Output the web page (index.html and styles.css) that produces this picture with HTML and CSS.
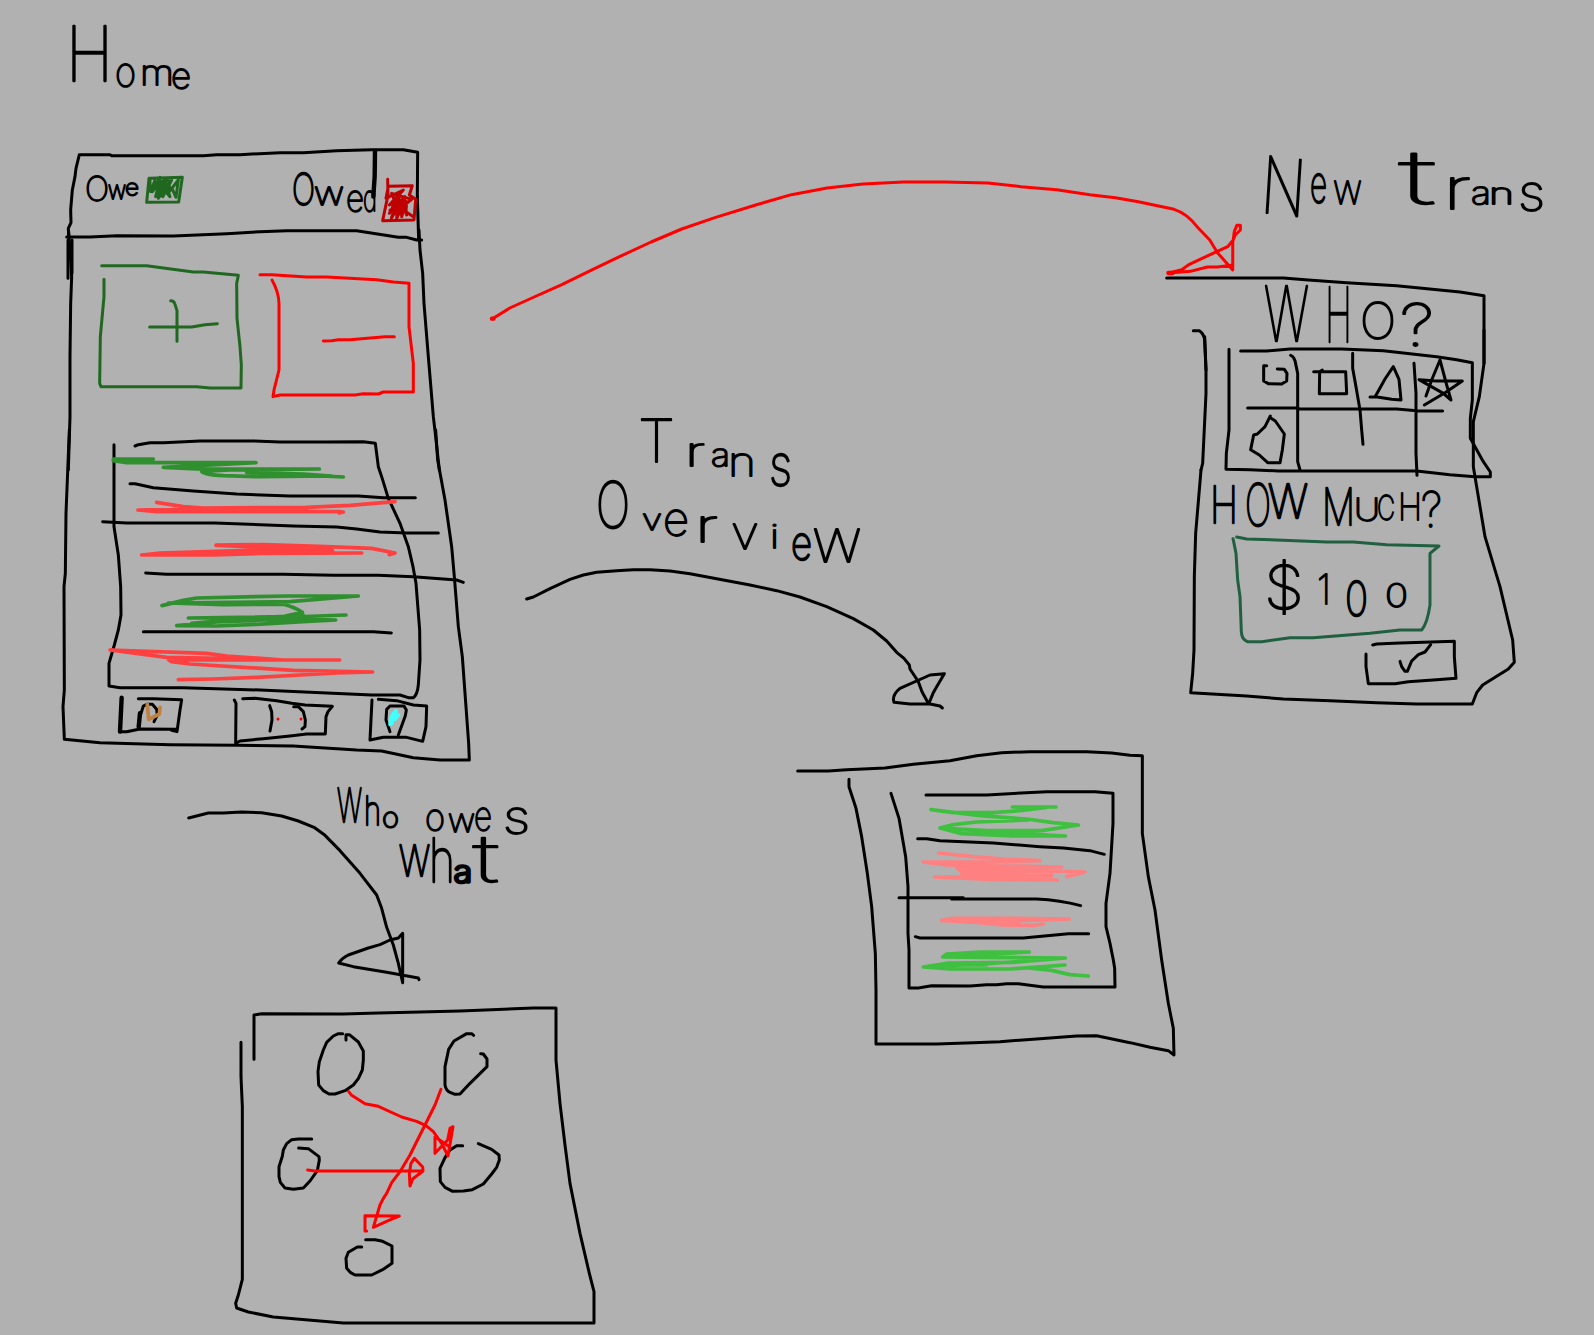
FILE: index.html
```html
<!DOCTYPE html>
<html lang="en">
<head>
<meta charset="utf-8">
<title>Home flow sketch</title>
<link rel="stylesheet" href="styles.css">
</head>
<body>
<main class="board">
<svg class="canvas" viewBox="0 0 1594 1335" role="img" aria-label="App flow sketch">
  <!-- Home screen: header -->
  <g class="ink" transform="translate(50 10) scale(.33333)">
    <path d="M56 680L55 655 63 638 62 600 67 540 75 500 78 475 88 434 180 434 185 437 460 437 500 434 570 434 690 428 760 428 860 422 965 419 1060 419 1103 427 1102 560 1106 690"/>
    <path d="M50 681L120 681 200 677 370 678 530 671 630 665 710 662 920 662 1045 682 1070 682 1100 690 1115 690"/>
    <path class="bold" d="M975 424L974 500 970 560"/>
    <path class="forest" d="M297 505L290 577 386 576 397 502 300 505 300 540M302 545L315 510 308 545 330 502 317 560 350 505 325 565 365 510 338 560 350 530 360 560 330 525 345 515 358 545 385 510 378 562 366 535M312 520L355 510 360 540 330 555 315 530 350 525 340 558"/>
    <path class="crimson" d="M1013 508L1014 555 998 632 1092 630 1097 568 1078 555 1087 527 1015 529 1008 565 1060 540 1018 585 1050 550 1018 610 1060 565 1024 625 1048 555 1040 626 1065 560 1055 620 1070 575 1068 605 1090 620M1025 580L1040 615 1030 560 1050 612 1060 580 1070 615M1025 550L1085 568 1045 600 1020 600"/>
  </g>
  <!-- Home screen: add and subtract tiles -->
  <g class="ink" transform="translate(50 230) scale(.33333)">
    <path d="M56 5L60 60 65 140 62 220 60 380 60 560 55 720"/>
    <path d="M54 30V145M66 30V130"/>
    <path d="M1107 0L1110 60 1118 130 1122 220 1135 380 1150 560 1157 620 1168 720"/>
    <path class="forest" d="M155 107H290L430 126 460 126 565 136 560 160 561 265 570 350 574 405 573 474 480 474 440 470 153 470 149 460 151 320 162 200V148"/>
    <path class="forest" d="M362 212Q372 212 374 220L381 242V334M299 291H425L465 284 502 281"/>
    <path class="red" d="M630 134L665 134 770 141 830 141 980 149 1030 156 1077 160V290L1090 400V486H1000L985 492 940 491 915 495H690L669 500 672 480 687 420 687 220Q686 185 666 150"/>
    <path class="red" d="M820 333L845 332 865 329 900 329 1005 320 1033 320"/>
  </g>
  <!-- Home screen: transaction list and tab bar -->
  <g class="ink" transform="translate(50 430) scale(.33333)">
    <path d="M58 0L48 250 46 430 42 470 43 780 39 830 43 928 150 938 360 944 560 946 730 948 920 960 995 963 1090 983 1170 990 1258 990 1256 940 1237 680 1225 590 1213 440 1205 350 1185 210 1163 90 1157 0"/>
    <path d="M192 44V290L205 375 212 470 213 555 205 600 193 645 177 700V768L210 773 400 773 630 780 965 795 1050 795 1075 803 1090 803Q1102 795 1105 765L1110 690 1109 600 1098 460 1089 410 1075 350 1050 280 1015 205 995 140 985 110 976 40 940 35 820 36 690 36 610 33 450 33 340 38 300 38 265 44 255 48"/>
    <path class="leaf wide" d="M310 87H190L190 92 230 98 618 98 340 112 440 117 808 117 540 120 455 124Q465 134 520 137L620 140 845 138 760 132 590 127 880 141"/>
    <path d="M240 161L255 161 310 173 430 183 560 192 720 198 925 198 1000 203 1096 203"/>
    <path class="coral wide" d="M320 217L400 230 460 234 770 232 900 226 1035 215M264 240L500 236 770 235M264 240L320 245 868 245 880 246 868 249"/>
    <path d="M158 275L230 279 495 279 730 288 860 291 920 297 990 306 1070 309 1165 309"/>
    <path class="coral wide" d="M498 345L640 344 830 350 965 355 1035 369 1018 374M498 346L700 354 848 362 640 360 330 369 275 375 490 375 640 370 935 369"/>
    <path d="M287 429L350 433 700 433 850 436 985 436 1090 440 1220 450 1240 457"/>
    <path class="leaf wide" d="M336 527L400 511 440 504 710 498 925 498 720 515 355 519 520 524 700 523Q735 532 757 547L700 560 415 564 640 564 888 555M857 570L760 568 640 570 500 576 380 587 500 588 620 583 760 575 857 570M425 580L560 568 760 555"/>
    <path d="M280 605L790 605 970 605 1024 609"/>
    <path class="coral wide" d="M869 690H700L530 678 470 670 180 660 350 682 540 686M869 690L356 690 365 695 420 702 730 721 968 726 860 729 620 742 490 747 385 749"/>
    <path class="bold" d="M215 803L210 905"/>
    <path d="M210 905L230 905 270 897 380 898M265 806H310L395 809 390 840 381 905 365 901"/>
    <path class="bold" d="M266 890L270 850"/>
    <path d="M270 860L280 828 290 823 307 823 320 838 322 855 312 875"/>
    <path class="copper wide" d="M292 823L296 868 328 852 330 832"/>
    <path d="M553 810L558 820 557 940 570 933 640 926 720 918 770 912 826 912 828 860 834 845 847 829 765 825 725 820 680 812 615 805 578 806"/>
    <path d="M659 827L665 845 666 870 660 903M731 830L745 830 760 845 766 870 765 890 756 897"/>
    <path class="red" d="M684 867h.1M753 867h.1"/>
    <path d="M966 810L962 890 960 930 1000 922 1070 922 1118 934 1128 890 1130 828 1090 825 1040 812 985 808"/>
    <path d="M1020 905L1008 870 1010 838 1020 828 1062 828 1069 840 1066 857 1045 915"/>
    <path class="cyan wide" d="M1038 842L1024 860 1020 883 1032 860 1038 842 1035 868 1045 855 1038 862M1030 850L1025 880"/>
  </g>
  <!-- Arrow: home to "who owes what" -->
  <g class="ink" transform="translate(180 770) scale(.33333)">
    <path d="M26 144L85 129 130 129 185 126 245 128 305 138 355 153 402 172 435 196 480 242 540 310 590 375 605 415 620 472 640 525 655 580 668 638V490L655 504 630 510 600 524 565 534 505 555Q485 565 476 579L520 590 620 607 715 624 717 629"/>
  </g>
  <!-- Who owes what screen -->
  <g class="ink" transform="translate(220 990) scale(.33333)">
    <path d="M102 208V75L125 71 370 72 475 69 600 66 720 63 940 54 1008 54V210L1020 340 1035 465 1050 580 1080 730 1108 850 1122 905V999H370L160 981 85 966 50 954 47 940 55 915 67 868V350L63 260V157"/>
    <path d="M378 150V134L388 134 415 156 430 183 430 210 427 240 415 266 400 285 375 302 345 312 327 312 310 302 296 285 294 245 298 215 310 180 320 157 340 138 355 131 368 131"/>
    <path d="M761 136L755 131 740 131 702 153 686 178 675 230 675 285Q678 302 690 307L705 313 720 312 750 280 801 230 801 207 790 192 782 191"/>
    <path d="M275 447H235L215 449 200 461 190 480 187 499 177 530 177 560 181 577 195 594 220 598 250 594 270 573 292 542 298 510 297 500 265 476 236 474"/>
    <path d="M728 467H710L690 480 675 503 660 535 661 575 675 592 698 604 730 603 757 599 790 582 815 552 830 532 838 510 837 495 815 478 775 461"/>
    <path d="M425 771L412 771 385 787 378 805 380 835 392 848 405 855H455L488 839 516 820 516 768 488 754 465 749 437 749"/>
    <path class="red" d="M386 305L395 316 435 341 475 349 545 381 590 394 618 407 640 425 665 460 684 498 699 410 690 415 683 450 645 490V440L688 470"/>
    <path class="red" d="M663 298L645 345 570 495 540 545 515 578 500 610 490 625 480 645 460 712 510 690 538 678 435 677V723H440"/>
    <path class="red" d="M263 540L285 543H609L608 531 583 505 573 520 568 550 570 588 578 567 609 543"/>
  </g>
  <!-- Arrow: home to transaction overview -->
  <g class="ink" transform="translate(470 380) scale(.33333)">
    <path d="M170 657L190 651 240 626 300 598 340 585 380 577 440 572 490 569 540 569 600 573 660 581 740 596 840 615 920 632 990 651 1070 680 1150 716 1210 750 1250 783 1280 817 1302 835 1318 855 1320 867 1345 905 1356 935 1376 972 1390 938 1400 920 1423 881 1380 885 1290 925Q1265 945 1272 967L1320 972 1380 972 1410 978 1417 984"/>
  </g>
  <!-- Transaction overview screen -->
  <g class="ink" transform="translate(780 730) scale(.33333)">
    <path d="M53 123H145L200 119 315 114 400 103 510 92 590 77 665 68 750 65H920L995 69 1050 76 1087 77V310L1105 440 1125 540 1145 690 1165 820 1180 895 1182 975 1165 962 1110 952 1050 938 950 917 890 918 780 926 660 935 580 938 470 942H288V780L286 670 275 530 262 430 245 320 228 235 207 170V148"/>
    <path d="M333 190L357 265 377 380 384 470V610L387 660V774H415L455 767 570 768 620 764 650 764 680 761 715 761 790 771H1005L1004 715 1000 690 990 640 978 590V520L990 430 999 280V190L945 185 800 185 620 195 438 195"/>
    <path class="lime wide" d="M828 231H697L800 232 720 242 640 248 520 248 453 239 600 257 740 267 820 278 895 285 785 302 620 302 480 294 520 284 590 276 745 270M480 294L545 311 700 318 856 318 640 306 510 296"/>
    <path d="M413 326H440L480 332 640 339 780 350 850 354 930 362 973 373"/>
    <path class="blush wide" d="M476 369L580 380 680 388 780 392 620 396 430 396 500 405 845 411 530 412 545 425 700 428 800 420M465 441L630 448 832 450M465 441L650 440 815 437 545 430M530 412L730 420 915 426 860 440"/>
    <path d="M357 503H550L515 507 770 507Q840 510 902 527"/>
    <path class="blush wide" d="M868 567L700 565 520 565 485 571 600 575 868 567M485 571L590 577 665 585 760 586 790 582M500 572L720 575"/>
    <path d="M406 620L420 624H730L865 611H926"/>
    <path class="lime wide" d="M748 666H600L500 672 488 681 620 682 856 684 700 697 505 699 430 711 510 717 690 717 855 705 745 714 815 721 870 734 925 738M488 681L748 666M430 711L640 700 856 684M510 705H620"/>
  </g>
  <!-- Arrow: home to new transaction -->
  <g class="ink" transform="translate(470 160) scale(.5102 .33333)">
    <path class="red" d="M44 476L78 444 130 408 180 374 240 329 290 292 355 246 415 207 480 173 560 135 630 104 700 84 770 72 850 66 930 66 1015 69 1080 80 1150 89 1215 104 1265 113 1310 125 1380 148Q1405 160 1425 200L1450 240 1465 278 1495 330V243L1500 225 1510 210 1510 196 1503 196 1498 215 1496 240 1485 260 1435 295 1410 313 1395 329 1370 339 1412 334 1445 321 1465 321 1492 316"/>
    <path class="red bold" d="M43 476h3M1369 339h8"/>
  </g>
  <!-- New transaction screen -->
  <g class="ink" transform="translate(1150 130) scale(.33333)">
    <path d="M50 444H400L475 450 590 458 740 467 930 486 1002 497V700"/>
    <path d="M130 602H148Q162 612 164 630L168 720"/>
  </g>
  <g class="ink" transform="translate(1170 330) scale(.33333)">
    <path d="M104 20L108 120 108 190 98 400 93 420M942 0V100L928 200 910 275V410L915 440"/>
    <path d="M177 58V300L169 370 168 418 240 419 325 423 740 423 840 434 915 440H961V426L940 395 901 325V265L907 210V98L860 89 800 80 640 62 515 57 360 57 290 63 212 63"/>
    <path d="M362 76Q370 78 375 92L383 130V395L390 420M548 70V115L557 165 570 240 575 300 579 343M732 100L738 190 738 370 741 436M233 234H380L390 237 680 237 740 242 818 243"/>
    <path d="M290 107L281 107 281 153 295 161 335 162 350 153 351 130 343 118 322 117"/>
    <path d="M431 125H527L530 191 448 191 449 125 457 120"/>
    <path d="M600 201L615 201 645 147 670 110 687 148 693 210 665 208 617 200"/>
    <path d="M763 225L825 188 877 153H800L747 149 820 190 843 210 830 165 810 90 785 150 768 198"/>
    <path d="M301 258L285 290 262 312 251 315 242 359 268 375 293 398 330 398 337 360 343 312 316 273 301 263"/>
  </g>
  <g class="ink" transform="translate(1170 470) scale(.33333)">
    <path d="M93 0L77 190 73 320 72 540 68 610 62 668 230 678 340 687 480 692 620 698 740 702 907 702 920 668 938 645 1015 597 1033 577 1028 510 990 350 945 200 915 20"/>
    <path class="teal" d="M200 201L230 207 320 210 470 216 550 216 650 224 807 228 780 250V405Q772 460 755 480L690 480 600 490 430 503 360 503 275 515 232 515Q215 508 214 485L210 380 203 330 198 250 191 215 189 206"/>
    <path d="M608 525L620 522 690 519 853 514 853 560 858 625 800 629 715 635 675 641H595L588 590V552"/>
    <path d="M690 574L695 590 705 604 712 604 725 573 745 554 765 546 782 524"/>
  </g>
  <!-- Labels -->
  <g class="label">
    <text><tspan class="tall" x="66" y="81" font-size="76" textLength="47" lengthAdjust="spacingAndGlyphs">H</tspan><tspan x="115" y="86" font-size="40" textLength="21" lengthAdjust="spacingAndGlyphs">o</tspan><tspan x="140" y="85" font-size="34" textLength="34" lengthAdjust="spacingAndGlyphs">m</tspan><tspan x="171" y="88" font-size="34" textLength="20" lengthAdjust="spacingAndGlyphs">e</tspan></text>
    <text><tspan x="85" y="201" font-size="34" textLength="24" lengthAdjust="spacingAndGlyphs">O</tspan><tspan x="108" y="199" font-size="24" textLength="18" lengthAdjust="spacingAndGlyphs">w</tspan><tspan x="125" y="195" font-size="22" textLength="14" lengthAdjust="spacingAndGlyphs">e</tspan></text>
    <text><tspan class="tall" x="292" y="205" font-size="44" textLength="23" lengthAdjust="spacingAndGlyphs">O</tspan><tspan x="314" y="205" font-size="32" textLength="30" lengthAdjust="spacingAndGlyphs">w</tspan><tspan x="346" y="211" font-size="36" textLength="18" lengthAdjust="spacingAndGlyphs">e</tspan><tspan x="363" y="211" font-size="36" textLength="14" lengthAdjust="spacingAndGlyphs">d</tspan></text>
    <text><tspan class="tall" x="1260" y="212" font-size="78" textLength="44" lengthAdjust="spacingAndGlyphs" rotate="5">N</tspan><tspan class="tall" x="1310" y="202" font-size="50" textLength="17" lengthAdjust="spacingAndGlyphs">e</tspan><tspan x="1333" y="204" font-size="41" textLength="29" lengthAdjust="spacingAndGlyphs">w</tspan> <tspan x="1399" y="204" font-size="74" textLength="37" lengthAdjust="spacingAndGlyphs">t</tspan><tspan x="1443" y="209" font-size="56" textLength="28" lengthAdjust="spacingAndGlyphs">r</tspan><tspan x="1471" y="204" font-size="31" textLength="20" lengthAdjust="spacingAndGlyphs">a</tspan><tspan x="1489" y="204" font-size="28" textLength="25" lengthAdjust="spacingAndGlyphs">n</tspan><tspan x="1518" y="210" font-size="48" textLength="27" lengthAdjust="spacingAndGlyphs">s</tspan></text>
    <text><tspan class="tall" x="1264" y="341" font-size="76" textLength="45" lengthAdjust="spacingAndGlyphs">W</tspan><tspan class="tall" x="1325" y="342" font-size="76" textLength="27" lengthAdjust="spacingAndGlyphs">H</tspan><tspan x="1360" y="339" font-size="50" textLength="36" lengthAdjust="spacingAndGlyphs">O</tspan><tspan x="1400" y="346" font-size="58" textLength="34" lengthAdjust="spacingAndGlyphs">?</tspan></text>
    <text><tspan class="tall" x="1210" y="523" font-size="50" textLength="28" lengthAdjust="spacingAndGlyphs">H</tspan><tspan class="tall" x="1245" y="526" font-size="58" textLength="26" lengthAdjust="spacingAndGlyphs">O</tspan><tspan class="tall" x="1268" y="518" font-size="46" textLength="40" lengthAdjust="spacingAndGlyphs">W</tspan> <tspan class="tall" x="1322" y="525" font-size="50" textLength="33" lengthAdjust="spacingAndGlyphs">M</tspan><tspan x="1354" y="521" font-size="31" textLength="26" lengthAdjust="spacingAndGlyphs">U</tspan><tspan x="1377" y="520" font-size="34" textLength="18" lengthAdjust="spacingAndGlyphs">C</tspan><tspan x="1398" y="520" font-size="37" textLength="24" lengthAdjust="spacingAndGlyphs">H</tspan><tspan x="1421" y="527" font-size="48" textLength="21" lengthAdjust="spacingAndGlyphs">?</tspan></text>
    <text><tspan x="1264" y="609" font-size="60" textLength="40" lengthAdjust="spacingAndGlyphs">$</tspan><tspan x="1317" y="604" font-size="41" textLength="14" lengthAdjust="spacingAndGlyphs">1</tspan><tspan class="tall" x="1345" y="616" font-size="48" textLength="23" lengthAdjust="spacingAndGlyphs">0</tspan><tspan x="1385" y="607" font-size="32" textLength="23" lengthAdjust="spacingAndGlyphs">0</tspan></text>
    <text><tspan x="638" y="462" font-size="59" textLength="37" lengthAdjust="spacingAndGlyphs">T</tspan><tspan x="685" y="466" font-size="40" textLength="20" lengthAdjust="spacingAndGlyphs">r</tspan><tspan x="711" y="466" font-size="30" textLength="19" lengthAdjust="spacingAndGlyphs">a</tspan><tspan x="728" y="476" font-size="40" textLength="28" lengthAdjust="spacingAndGlyphs">n</tspan><tspan class="tall" x="769" y="485" font-size="56" textLength="23" lengthAdjust="spacingAndGlyphs">s</tspan></text>
    <text><tspan class="tall" x="596" y="528" font-size="64" textLength="34" lengthAdjust="spacingAndGlyphs">O</tspan><tspan x="642" y="530" font-size="29" textLength="20" lengthAdjust="spacingAndGlyphs">v</tspan><tspan x="663" y="535" font-size="45" textLength="26" lengthAdjust="spacingAndGlyphs">e</tspan><tspan x="695" y="542" font-size="46" textLength="23" lengthAdjust="spacingAndGlyphs">r</tspan><tspan x="731" y="549" font-size="46" textLength="28" lengthAdjust="spacingAndGlyphs">v</tspan><tspan x="770" y="548" font-size="33" textLength="9" lengthAdjust="spacingAndGlyphs">i</tspan><tspan class="tall" x="791" y="559" font-size="46" textLength="21" lengthAdjust="spacingAndGlyphs">e</tspan><tspan x="812" y="562" font-size="60" textLength="50" lengthAdjust="spacingAndGlyphs">w</tspan></text>
    <text><tspan class="tall" x="337" y="822" font-size="46" textLength="25" lengthAdjust="spacingAndGlyphs">W</tspan><tspan class="tall" x="364" y="825" font-size="40" textLength="17" lengthAdjust="spacingAndGlyphs">h</tspan><tspan x="382" y="827" font-size="26" textLength="17" lengthAdjust="spacingAndGlyphs">o</tspan> <tspan x="425" y="830" font-size="36" textLength="20" lengthAdjust="spacingAndGlyphs">o</tspan><tspan x="448" y="832" font-size="33" textLength="27" lengthAdjust="spacingAndGlyphs">w</tspan><tspan x="474" y="830" font-size="39" textLength="18" lengthAdjust="spacingAndGlyphs">e</tspan><tspan x="503" y="833" font-size="45" textLength="27" lengthAdjust="spacingAndGlyphs">s</tspan></text>
    <text><tspan class="tall" x="399" y="876" font-size="42" textLength="31" lengthAdjust="spacingAndGlyphs">W</tspan><tspan class="tall" x="429" y="882" font-size="60" textLength="26" lengthAdjust="spacingAndGlyphs">h</tspan><tspan class="smudged" x="454" y="882" font-size="28" textLength="18" lengthAdjust="spacingAndGlyphs">a</tspan><tspan x="473" y="882" font-size="65" textLength="26" lengthAdjust="spacingAndGlyphs">t</tspan></text>
  </g>
</svg>
</main>
</body>
</html>
```
FILE: styles.css
```css
body {
  margin: 0;
  background: #b1b1b1;
}

.board {
  width: 1594px;
  height: 1335px;
  overflow: hidden;
}

.canvas {
  display: block;
  width: 100%;
  height: 100%;
}

.ink path {
  fill: none;
  stroke: #000;
  stroke-width: 3px;
  stroke-linecap: round;
  stroke-linejoin: round;
  vector-effect: non-scaling-stroke;
}

.ink .wide { stroke-width: 3.7px; }
.ink .bold { stroke-width: 4.4px; }
.ink .forest { stroke: #206820; }
.ink .leaf { stroke: #309030; }
.ink .lime { stroke: #40c040; }
.ink .teal { stroke: #206040; }
.ink .red { stroke: #f00; }
.ink .crimson { stroke: #c00000; }
.ink .coral { stroke: #ff4040; }
.ink .blush { stroke: #ff8080; }
.ink .copper { stroke: #c08040; }
.ink .cyan { stroke: #40ffff; }

.label {
  font-family: "Inter", "Liberation Sans", sans-serif;
  font-weight: 100;
  fill: #000;
  stroke: #000;
  stroke-width: 1.8px;
  stroke-linejoin: round;
}

.label .tall { stroke-width: 2.3px; }
.label .smudged { stroke-width: 3.4px; }
```
